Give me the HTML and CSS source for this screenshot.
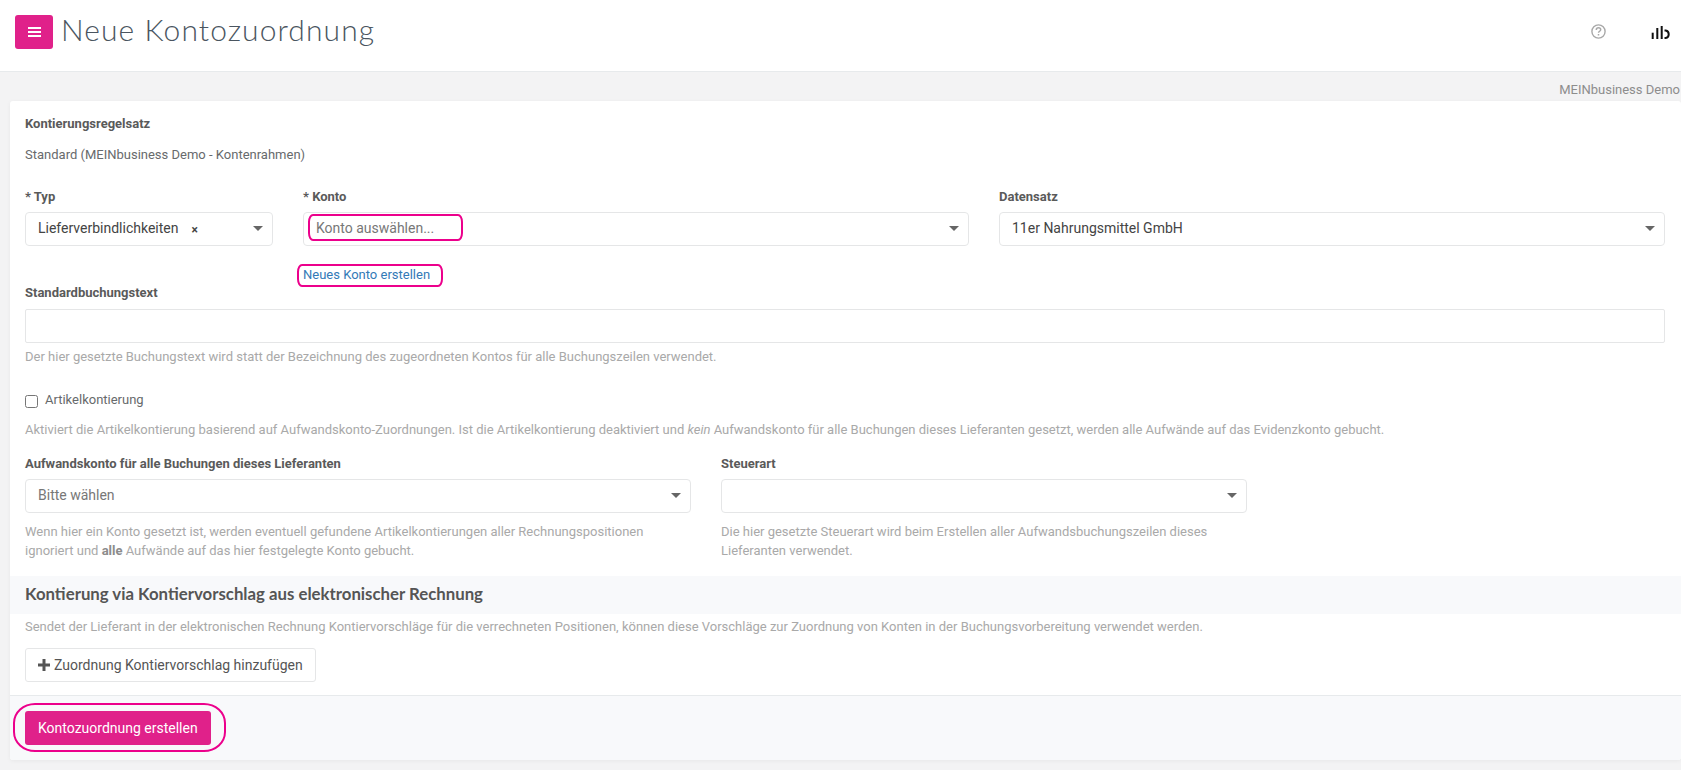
FILE: index.html
```html
<!DOCTYPE html>
<html lang="de">
<head>
    <meta charset="UTF-8">
    <meta name="viewport" content="width=device-width, initial-scale=1.0">
    <title>Neue Kontozuordnung</title>
    <link rel="stylesheet" href="styles.css">
</head>
<body>
    <header class="topbar">
        <button class="menu-btn" type="button" aria-label="Menü">
            <svg width="13" height="10" viewBox="0 0 13 10"><path d="M0 0h13v2H0zM0 4h13v2H0zM0 8h13v2H0z" fill="#fff"/></svg>
        </button>
        <h1 class="page-title">Neue Kontozuordnung</h1>
        <div class="topbar-icons">
            <svg class="help-icon" width="15" height="15" viewBox="0 0 15 15" fill="none" stroke="#a9a9a9">
                <circle cx="7.5" cy="7.5" r="6.6" stroke-width="1.4"/>
                <path d="M5.300 5.900c0-1.300 1-2.100 2.200-2.100 1.200 0 2.200.8 2.200 1.900 0 1.500-2.200 1.600-2.200 3.100" stroke-width="1.500"/>
                <path d="M7.500 10v1.500" stroke-width="1.500"/>
            </svg>
            <svg class="logo" width="20" height="13" viewBox="0 0 20 13">
                <rect x="0.700" y="6.700" width="2" height="6.300" fill="#111"/>
                <rect x="5.300" y="2" width="2" height="11" fill="#111"/>
                <rect x="9.700" y="0" width="2" height="13" fill="#111"/>
                <path d="M13.500 4.500h1.200a3.600 3.800 0 0 1 0 7.500h-1.200" fill="none" stroke="#111" stroke-width="2"/>
            </svg>
        </div>
    </header>

    <div class="company-line">MEINbusiness Demo</div>

    <main class="card">
        <div class="card-body">
            <div class="label">Kontierungsregelsatz</div>
            <p class="static-value">Standard (MEINbusiness Demo - Kontenrahmen)</p>

            <div class="row-three">
                <div class="field">
                    <div class="label">* Typ</div>
                    <div class="select">
                        <span class="select-text">Lieferverbindlichkeiten</span>
                        <span class="select-clear">×</span>
                        <span class="caret"></span>
                    </div>
                </div>
                <div class="field">
                    <div class="label">* Konto</div>
                    <div class="select">
                        <span class="select-placeholder">Konto auswählen...</span>
                        <span class="caret"></span>
                    </div>
                    <a class="new-link" href="#">Neues Konto erstellen</a>
                </div>
                <div class="field">
                    <div class="label">Datensatz</div>
                    <div class="select">
                        <span class="select-value">11er Nahrungsmittel GmbH</span>
                        <span class="caret"></span>
                    </div>
                </div>
            </div>

            <div class="label label-text">Standardbuchungstext</div>
            <input class="text-input" type="text">
            <p class="help help-first">Der hier gesetzte Buchungstext wird statt der Bezeichnung des zugeordneten Kontos für alle Buchungszeilen verwendet.</p>

            <label class="check-row">
                <input class="checkbox" type="checkbox">
                <span>Artikelkontierung</span>
            </label>
            <p class="help help-check">Aktiviert die Artikelkontierung basierend auf Aufwandskonto-Zuordnungen. Ist die Artikelkontierung deaktiviert und <em>kein</em> Aufwandskonto für alle Buchungen dieses Lieferanten gesetzt, werden alle Aufwände auf das Evidenzkonto gebucht.</p>

            <div class="row-two">
                <div class="field">
                    <div class="label">Aufwandskonto für alle Buchungen dieses Lieferanten</div>
                    <div class="select">
                        <span class="select-muted">Bitte wählen</span>
                        <span class="caret"></span>
                    </div>
                    <p class="help help-field">Wenn hier ein Konto gesetzt ist, werden eventuell gefundene Artikelkontierungen aller Rechnungspositionen ignoriert und <b>alle</b> Aufwände auf das hier festgelegte Konto gebucht.</p>
                </div>
                <div class="field">
                    <div class="label">Steuerart</div>
                    <div class="select">
                        <span class="caret"></span>
                    </div>
                    <p class="help help-field">Die hier gesetzte Steuerart wird beim Erstellen aller Aufwandsbuchungszeilen dieses Lieferanten verwendet.</p>
                </div>
            </div>
        </div>

        <h2 class="section-title">Kontierung via Kontiervorschlag aus elektronischer Rechnung</h2>

        <div class="section-body">
            <p class="help">Sendet der Lieferant in der elektronischen Rechnung Kontiervorschläge für die verrechneten Positionen, können diese Vorschläge zur Zuordnung von Konten in der Buchungsvorbereitung verwendet werden.</p>
            <button class="btn-add" type="button">
                <svg width="12" height="12" viewBox="0 0 12 12"><path d="M4.500 0h3v4.500H12v3H7.500V12h-3V7.500H0v-3h4.500z" fill="#555"/></svg>
                Zuordnung Kontiervorschlag hinzufügen
            </button>
        </div>

        <div class="card-footer">
            <button class="btn-primary" type="button">Kontozuordnung erstellen</button>
        </div>
    </main>

    <!-- pink marks drawn over the screenshot -->
    <div class="mark mark-konto"></div>
    <div class="mark mark-link"></div>
    <div class="mark mark-submit"></div>
</body>
</html>
```

FILE: styles.css
```css
* {
    box-sizing: border-box;
}

body {
    margin: 0;
    height: 770px;
    overflow: hidden;
    position: relative;
    background-color: #f3f3f4;
    font-family: Roboto, sans-serif;
    font-size: 13px;
    color: #676a6c;
}

p {
    margin: 0;
}

.topbar {
    display: flex;
    align-items: flex-start;
    height: 72px;
    padding: 15px 0 0 15px;
    background: #fff;
    border-bottom: 1px solid #e7eaec;
}

.menu-btn {
    display: flex;
    align-items: center;
    justify-content: center;
    width: 38px;
    height: 34px;
    padding: 0;
    border: none;
    border-radius: 3px;
    background-color: #e0218a;
}

.page-title {
    margin: -5px 0 0 8px;
    font-family: Lato, sans-serif;
    font-weight: 300;
    font-size: 30px;
    letter-spacing: 1.1px;
    line-height: 38px;
    color: #4a5560;
}

.topbar-icons {
    display: flex;
    align-items: flex-start;
    gap: 45px;
    margin-left: auto;
    padding: 9px 10px 0 0;
}

.logo {
    margin-top: 2px;
}

.company-line {
    height: 29px;
    padding: 10px 1px 0 0;
    text-align: right;
    line-height: 16px;
    color: #8d8d8d;
}

.card {
    margin-left: 10px;
    height: 659px;
    background: #fff;
    border-radius: 3px;
    box-shadow: 0 1px 4px rgba(0, 0, 0, 0.05);
    overflow: hidden;
}

.card-body {
    padding: 15px 16px 0 15px;
    height: 475px;
}

.label {
    font-weight: 700;
    line-height: 16px;
    color: #5a5a5a;
}

.static-value {
    margin-top: 15px;
    line-height: 16px;
}

.row-three {
    display: grid;
    grid-template-columns: 248px 1fr 1fr;
    column-gap: 30px;
    margin-top: 26px;
}

.row-two {
    display: grid;
    grid-template-columns: 666px 526px;
    column-gap: 30px;
    margin-top: 17px;
}

.select {
    display: flex;
    align-items: center;
    height: 34px;
    margin-top: 7px;
    padding: 0 9px 2px 12px;
    background: #fff;
    border: 1px solid #e5e6e7;
    border-radius: 4px;
    font-size: 14px;
    color: #444;
}

.select-clear {
    margin: 3px 0 0 13px;
    font-size: 12px;
    font-weight: 700;
    color: #444;
}

.select-placeholder,
.select-muted {
    color: #777;
}

.caret {
    margin-left: auto;
    border-left: 5px solid transparent;
    border-right: 5px solid transparent;
    border-top: 5px solid #666;
}

.new-link {
    display: block;
    margin-top: 21px;
    line-height: 16px;
    color: #337ab7;
    text-decoration: none;
}

.label-text {
    margin-top: 2px;
}

.text-input {
    display: block;
    width: 100%;
    height: 34px;
    margin-top: 8px;
    border: 1px solid #e5e6e7;
    border-radius: 2px;
    background: #fff;
}

.help {
    line-height: 18px;
    color: #a9a9a9;
}

.help b {
    color: #8c8c8c;
}

.help-first {
    margin-top: 5px;
}

.check-row {
    display: flex;
    align-items: flex-start;
    gap: 7px;
    margin-top: 26px;
    line-height: 16px;
}

.checkbox {
    width: 13px;
    height: 13px;
    margin: 3px 0 0;
}

.help-check {
    margin-top: 13px;
}

.help-field {
    margin-top: 10px;
    max-width: 640px;
    line-height: 18.500px;
}

.section-title {
    display: flex;
    align-items: center;
    height: 38px;
    margin: 0;
    padding: 0 15px 3px;
    background-color: #f8f9fb;
    font-family: Lato, sans-serif;
    font-weight: 700;
    font-size: 16.800px;
    color: #555;
}

.section-body {
    padding: 4px 15px 0;
    height: 81px;
}

.btn-add {
    display: flex;
    align-items: center;
    gap: 4px;
    height: 34px;
    margin-top: 12px;
    padding: 0 12px;
    background: #fff;
    border: 1px solid #e5e6e7;
    border-radius: 3px;
    font-family: Roboto, sans-serif;
    font-size: 14px;
    color: #555;
}

.card-footer {
    height: 66px;
    padding: 15px 15px 0;
    background-color: #f8f9fb;
    border-top: 1px solid #e7eaec;
}

.btn-primary {
    height: 34px;
    padding: 0 13px;
    border: none;
    border-radius: 3px;
    background-color: #e0218a;
    font-family: Roboto, sans-serif;
    font-size: 14px;
    color: #fff;
}

.mark {
    position: absolute;
    border: 2.500px solid #ec008c;
}

.mark-konto {
    left: 308px;
    top: 214px;
    width: 155px;
    height: 27px;
    border-radius: 5px / 8px;
}

.mark-link {
    left: 297px;
    top: 264px;
    width: 146px;
    height: 23px;
    border-radius: 5px / 8px;
}

.mark-submit {
    left: 13px;
    top: 703px;
    width: 213px;
    height: 49px;
    border-radius: 22px / 20px;
}
```
